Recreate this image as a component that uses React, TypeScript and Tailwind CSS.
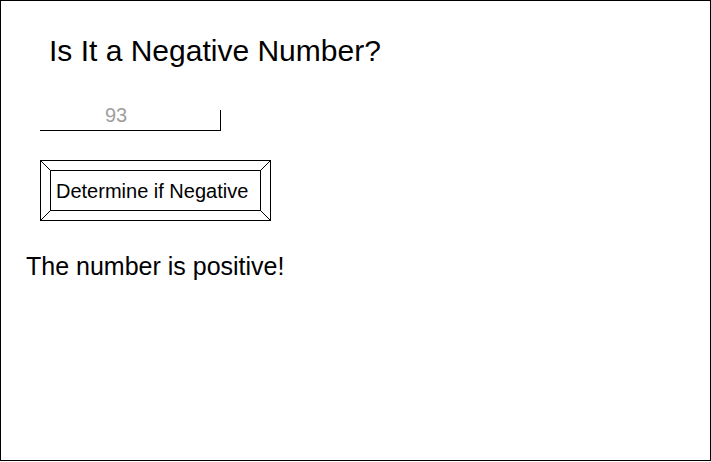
import React from "react";

export default function App() {
  return (
    <div
      className="w-[711px] h-[461px] border border-black bg-white text-black flex flex-col items-start"
      style={{ fontFamily: '"Liberation Sans", Arial, sans-serif' }}
    >
      <div className="ml-[48px] mt-[35px] text-[30px] leading-[30px] whitespace-nowrap">
        Is It a Negative Number?
      </div>

      <div className="ml-[39px] mt-[44px] w-[181px] h-[21px] border-b border-r border-black">
        <div className="-mt-[5px] pl-[65px] text-[20px] leading-[20px] text-[#9e9e9e]">93</div>
      </div>

      <div className="relative ml-[39px] mt-[29px] w-[231px] h-[61px] border border-black p-[9px]">
        <svg
          className="absolute -left-px -top-px pointer-events-none"
          width="231"
          height="61"
          viewBox="0 0 231 61"
        >
          <line x1="0.5" y1="0.5" x2="10.5" y2="10.5" stroke="black" strokeWidth="1" />
          <line x1="230.5" y1="0.5" x2="220.5" y2="10.5" stroke="black" strokeWidth="1" />
          <line x1="0.5" y1="60.5" x2="10.5" y2="50.5" stroke="black" strokeWidth="1" />
          <line x1="230.5" y1="60.5" x2="220.5" y2="50.5" stroke="black" strokeWidth="1" />
        </svg>
        <div className="w-[211px] h-[41px] border border-black flex items-center pl-[5px] text-[20px] leading-[20px] whitespace-nowrap">
          Determine if Negative
        </div>
      </div>

      <div className="ml-[25px] mt-[33px] text-[25px] leading-[25px] whitespace-nowrap">
        The number is positive!
      </div>
    </div>
  );
}
